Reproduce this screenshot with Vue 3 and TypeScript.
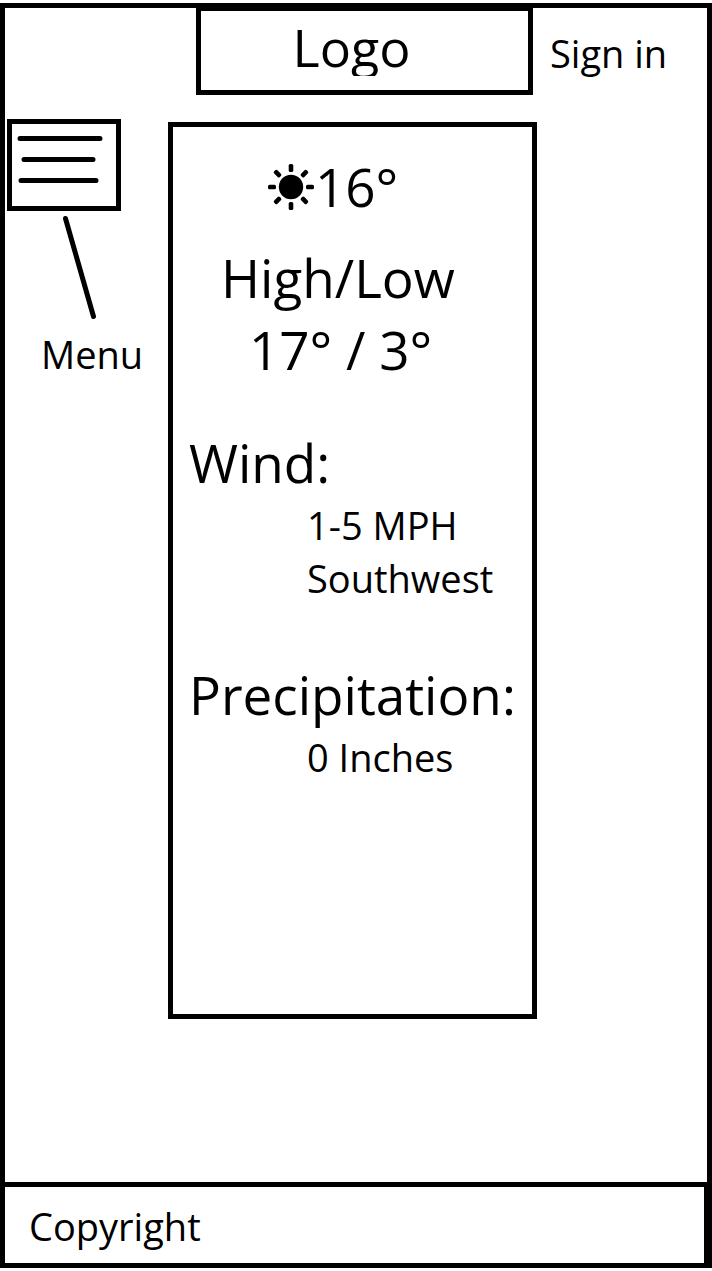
<script setup lang="ts">
interface Reading {
  title: string
  values: string[]
}

const readings: Reading[] = [
  { title: 'Wind:', values: ['1-5 MPH', 'Southwest'] },
  { title: 'Precipitation:', values: ['0 Inches'] },
]

const rays: number[] = [0, 45, 90, 135, 180, 225, 270, 315]
</script>

<template>
  <div class="page">
    <header class="header">
      <div class="logo"><span class="logo-text">Logo</span></div>
      <a class="sign-in" href="#">Sign in</a>
    </header>

    <main class="main">
      <nav class="side">
        <button class="menu-button" type="button" aria-labelledby="menu-label">
          <svg class="menu-lines" width="104" height="82" viewBox="0 0 104 82" aria-hidden="true">
            <path d="M8 14.500H88M12 35.500H81M9 56.500H84" />
          </svg>
        </button>
        <svg class="pointer" width="40" height="108" viewBox="0 0 40 108" aria-hidden="true">
          <path d="M5.500 7.500L33.500 105.500" />
        </svg>
        <span id="menu-label" class="menu-label">Menu</span>
      </nav>

      <section class="card">
        <p class="now">
          <svg class="sun" width="46" height="46" viewBox="-23 -23 46 46" aria-hidden="true">
            <circle r="12.200" />
            <rect
              v-for="angle in rays"
              :key="angle"
              x="-2.300"
              y="-23"
              width="4.600"
              height="8"
              rx="1.600"
              :transform="`rotate(${angle})`"
            />
          </svg>
          <span>16°</span>
        </p>
        <h2 class="range-title">High/Low</h2>
        <p class="range">17° / 3°</p>
        <section v-for="reading in readings" :key="reading.title" class="reading">
          <h2 class="reading-title">{{ reading.title }}</h2>
          <p v-for="value in reading.values" :key="value" class="reading-value">{{ value }}</p>
        </section>
      </section>
    </main>

    <footer class="footer">Copyright</footer>
  </div>
</template>

<style>
body {
  margin: 0;
  background: #fff;
}
</style>

<style scoped>
.page {
  box-sizing: border-box;
  display: flex;
  flex-direction: column;
  min-height: calc(100vh - 6px);
  margin: 3px 0;
  border: 5px solid #000;
  color: #000;
  font-family: "Open Sans", "Noto Sans", sans-serif;
  font-size: 38px;
  line-height: 52px;
}

h2,
p {
  margin: 0;
  font-weight: 400;
}

.header {
  display: grid;
  grid-template-columns: 191fr 337fr 174fr;
}

.logo {
  box-sizing: border-box;
  grid-column: 2;
  height: 87px;
  border: 5px solid #000;
  border-top-width: 3px;
  padding-top: 3px;
  text-align: center;
}

.logo-text {
  display: block;
  height: 62px;
  margin-right: 26px;
  overflow: hidden;
  font-size: 52px;
  line-height: 66px;
}

.sign-in {
  padding: 19px 0 0 17px;
  color: inherit;
  text-decoration: none;
}

.main {
  display: grid;
  grid-template-columns: 163fr 369fr 170fr;
  align-items: start;
  flex: 1;
  padding-top: 24px;
}

.side {
  display: flex;
  flex-direction: column;
  align-items: flex-start;
}

.menu-button {
  display: block;
  margin-left: 2px;
  padding: 0;
  border: 5px solid #000;
  background: #fff;
  cursor: pointer;
}

.menu-lines {
  display: block;
}

.pointer {
  margin-left: 55px;
}

.menu-lines path,
.pointer path {
  fill: none;
  stroke: #000;
  stroke-width: 5;
  stroke-linecap: round;
}

.menu-label {
  margin: 9px 0 0 36px;
}

.card {
  box-sizing: border-box;
  min-height: 897px;
  margin-top: 3px;
  border: 5px solid #000;
  padding: 24px 0 0 16px;
  font-size: 53px;
  line-height: 72px;
}

.now {
  display: flex;
  align-items: center;
  padding-left: 79px;
}

.sun {
  margin-right: 1px;
}

.range-title {
  margin-top: 19px;
  padding-left: 32px;
  font-size: 53px;
}

.range {
  padding-left: 60px;
}

.reading {
  margin-top: 41px;
}

.reading + .reading {
  margin-top: 54px;
}

.reading-title {
  font-size: 53px;
}

.reading-value {
  padding-left: 118px;
  font-size: 38px;
  line-height: 53px;
}

.footer {
  box-sizing: border-box;
  min-height: 81px;
  border-top: 5px solid #000;
  border-right: 3px solid #000;
  padding: 13px 24px 11px;
}
</style>
